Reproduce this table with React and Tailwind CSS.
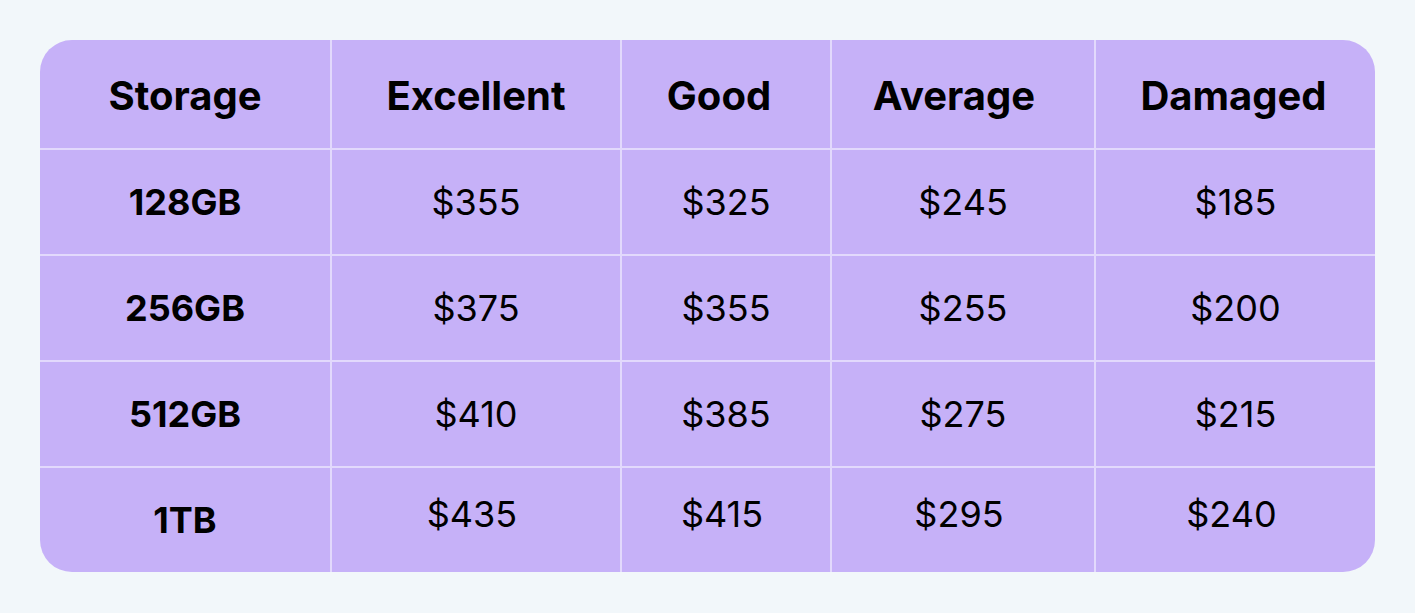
const headers = ["Storage", "Excellent", "Good", "Average", "Damaged"];
const headerPad = ["", "", "pr-[14px]", "pr-[18px]", "pr-1"];

const rows = [
  ["128GB", "$355", "$325", "$245", "$185"],
  ["256GB", "$375", "$355", "$255", "$200"],
  ["512GB", "$410", "$385", "$275", "$215"],
  ["1TB", "$435", "$415", "$295", "$240"],
];

export default function App() {
  return (
    <div className="min-h-screen bg-[#f2f7fa] pt-10 pl-10 font-['Inter',sans-serif] text-black">
      <div className="w-[1335px] overflow-hidden rounded-[32px] bg-[#c6b1f8]">
        <div className="grid grid-cols-[292px_290px_210px_264px_279px]">
          {headers.map((h, i) => (
            <div
              key={h}
              className={`flex h-[110px] items-center justify-center border-b-2 border-[#e2d9fc] pt-1 text-[40px] font-bold ${
                i < 4 ? "border-r-2" : ""
              } ${headerPad[i]}`}
            >
              {h}
            </div>
          ))}
          {rows.map((row, r) =>
            row.map((cell, i) => (
              <div
                key={r + "-" + i}
                className={`flex items-center justify-center border-[#e2d9fc] text-[36px] ${
                  r < 3 ? "h-[106px] border-b-2" : "h-[104px]"
                } ${r === 3 && i > 0 ? "pb-3 pr-2" : ""} ${i < 4 ? "border-r-2" : ""} ${
                  i === 0 ? "font-bold" : "font-normal"
                }`}
              >
                {cell}
              </div>
            ))
          )}
        </div>
      </div>
    </div>
  );
}
